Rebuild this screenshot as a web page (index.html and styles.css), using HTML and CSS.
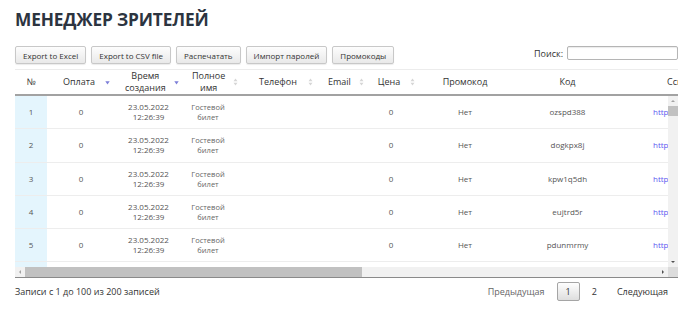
FILE: index.html
```html
<!DOCTYPE html>
<html lang="ru">
<head>
<meta charset="utf-8">
<title>Менеджер зрителей</title>
<link rel="stylesheet" href="styles.css">
</head>
<body>
<div class="page">
  <h1 class="title">МЕНЕДЖЕР ЗРИТЕЛЕЙ</h1>
  <div class="toolbar">
    <div class="buttons">
      <button class="btn" type="button">Export to Excel</button>
      <button class="btn" type="button">Export to CSV file</button>
      <button class="btn" type="button">Распечатать</button>
      <button class="btn" type="button">Импорт паролей</button>
      <button class="btn" type="button">Промокоды</button>
    </div>
    <label class="search">Поиск: <input class="search-input" type="search"></label>
  </div>

  <div class="dt">
    <div class="dt-head">
      <table class="grid">
        <colgroup>
          <col class="w-num"><col class="w-pay"><col class="w-time"><col class="w-name"><col class="w-phone"><col class="w-email"><col class="w-price"><col class="w-promo"><col class="w-code"><col class="w-link">
        </colgroup>
        <thead>
          <tr>
            <th><div class="th-in"><span class="th-t">№</span></div></th>
            <th><div class="th-in"><span class="th-t th-pay">Оплата</span><svg class="sort" viewBox="0 0 5 8"><path d="M0.3 3.3h4.4L2.5 6.6z" fill="#7c7fd8"/></svg></div></th>
            <th><div class="th-in"><span class="th-t">Время создания</span><svg class="sort" viewBox="0 0 5 8"><path d="M0.3 3.3h4.4L2.5 6.6z" fill="#7c7fd8"/></svg></div></th>
            <th><div class="th-in"><span class="th-t">Полное имя</span><svg class="sort" viewBox="0 0 5 8"><path d="M0.5 3.2h4L2.5 0.5z M0.5 4.8h4L2.5 7.5z" fill="#d6d6d6"/></svg></div></th>
            <th><div class="th-in"><span class="th-t th-phone">Телефон</span><svg class="sort" viewBox="0 0 5 8"><path d="M0.5 3.2h4L2.5 0.5z M0.5 4.8h4L2.5 7.5z" fill="#d6d6d6"/></svg></div></th>
            <th><div class="th-in"><span class="th-t">Email</span><svg class="sort" viewBox="0 0 5 8"><path d="M0.5 3.2h4L2.5 0.5z M0.5 4.8h4L2.5 7.5z" fill="#d6d6d6"/></svg></div></th>
            <th><div class="th-in"><span class="th-t th-price">Цена</span><svg class="sort" viewBox="0 0 5 8"><path d="M0.5 3.2h4L2.5 0.5z M0.5 4.8h4L2.5 7.5z" fill="#d6d6d6"/></svg></div></th>
            <th><div class="th-in"><span class="th-t">Промокод</span></div></th>
            <th><div class="th-in"><span class="th-t">Код</span></div></th>
            <th class="th-left"><div class="th-in"><span class="th-t">Ссылка</span></div></th>
          </tr>
        </thead>
      </table>
    </div>
    <div class="dt-scroll">
      <div class="viewport">
        <table class="grid">
          <colgroup>
            <col class="w-num"><col class="w-pay"><col class="w-time"><col class="w-name"><col class="w-phone"><col class="w-email"><col class="w-price"><col class="w-promo"><col class="w-code"><col class="w-link">
          </colgroup>
          <tbody>
            <tr><td class="sorted">1</td><td>0</td><td>23.05.2022 12:26:39</td><td class="name">Гостевой билет</td><td></td><td></td><td>0</td><td>Нет</td><td>ozspd388</td><td class="link"><a href="#">https://tickets.example.ru/t/ozspd388</a></td></tr>
            <tr><td class="sorted">2</td><td>0</td><td>23.05.2022 12:26:39</td><td class="name">Гостевой билет</td><td></td><td></td><td>0</td><td>Нет</td><td>dogkpx8j</td><td class="link"><a href="#">https://tickets.example.ru/t/dogkpx8j</a></td></tr>
            <tr><td class="sorted">3</td><td>0</td><td>23.05.2022 12:26:39</td><td class="name">Гостевой билет</td><td></td><td></td><td>0</td><td>Нет</td><td>kpw1q5dh</td><td class="link"><a href="#">https://tickets.example.ru/t/kpw1q5dh</a></td></tr>
            <tr><td class="sorted">4</td><td>0</td><td>23.05.2022 12:26:39</td><td class="name">Гостевой билет</td><td></td><td></td><td>0</td><td>Нет</td><td>eujtrd5r</td><td class="link"><a href="#">https://tickets.example.ru/t/eujtrd5r</a></td></tr>
            <tr><td class="sorted">5</td><td>0</td><td>23.05.2022 12:26:39</td><td class="name">Гостевой билет</td><td></td><td></td><td>0</td><td>Нет</td><td>pdunmrmy</td><td class="link"><a href="#">https://tickets.example.ru/t/pdunmrmy</a></td></tr>
            <tr><td class="sorted">&nbsp;</td><td></td><td></td><td></td><td></td><td></td><td></td><td></td><td></td><td></td></tr>
          </tbody>
        </table>
      </div>
      <div class="vbar">
        <div class="sb-btn"><svg viewBox="0 0 10 10"><path d="M3 6h4L5 4z" fill="#a3a3a3"/></svg></div>
        <div class="vthumb"></div>
        <div class="sb-track"></div>
        <div class="sb-btn"><svg viewBox="0 0 10 10"><path d="M3 4h4L5 6z" fill="#505050"/></svg></div>
      </div>
      <div class="hbar">
        <div class="sb-btn"><svg viewBox="0 0 10 10"><path d="M6 3v4L4 5z" fill="#a3a3a3"/></svg></div>
        <div class="hthumb"></div>
        <div class="sb-track"></div>
        <div class="sb-btn"><svg viewBox="0 0 10 10"><path d="M4 3v4L6 5z" fill="#505050"/></svg></div>
      </div>
      <div class="corner"></div>
    </div>
  </div>

  <div class="footer">
    <div class="info">Записи с 1 до 100 из 200 записей</div>
    <div class="pager">
      <span class="pg-link disabled">Предыдущая</span>
      <span class="pg-btn">1</span>
      <span class="pg-link">2</span>
      <span class="pg-link">Следующая</span>
    </div>
  </div>
</div>
</body>
</html>
```

FILE: styles.css
```css
* { box-sizing: border-box; }
html, body { margin: 0; padding: 0; background: #fff; }
body {
  font-family: "Open Sans", "Noto Sans", sans-serif;
  color: #333;
  width: 700px;
  height: 311px;
  overflow: hidden;
}
.page { padding: 9px 22px 0 15px; }
.title {
  margin: 0;
  font-size: 17.3px;
  line-height: 22px;
  font-weight: 700;
  color: #2c3440;
  letter-spacing: -0.15px;
}
.toolbar {
  margin-top: 15px;
  display: flex;
  justify-content: space-between;
  align-items: flex-start;
}
.buttons { display: flex; gap: 5px; }
.btn {
  font-family: inherit;
  font-size: 8px;
  line-height: 11px;
  height: 18px;
  padding: 0 7px;
  color: #333;
  border: 1px solid #c8c8c8;
  border-radius: 2px;
  background: linear-gradient(#fdfdfd, #e9e9e9);
  box-shadow: 0 1px 1px rgba(0,0,0,0.08);
}
.search { display: flex; align-items: center; gap: 4px; font-size: 9px; color: #333; }
.search-input {
  width: 111px;
  height: 14px;
  border: 1px solid #b5b5b5;
  border-radius: 2px;
  padding: 0 3px;
  box-shadow: inset 0 1px 1px rgba(0,0,0,0.08);
}
.dt { margin-top: 5px; }
.dt-head { overflow: hidden; }
.grid { table-layout: fixed; width: 920px; border-collapse: collapse; }
.w-num { width: 32px; }
.w-pay { width: 68px; }
.w-time { width: 67px; }
.w-name { width: 52px; }
.w-phone { width: 84px; }
.w-email { width: 44px; }
.w-price { width: 58px; }
.w-promo { width: 90px; }
.w-code { width: 115px; }
.w-link { width: 310px; }

.grid th {
  border-top: 1px solid #ececec;
  border-bottom: 2px solid #a2a2a2;
  padding: 0;
  height: 25px;
  font-size: 9px;
  line-height: 12px;
  font-weight: 400;
  color: #333;
  vertical-align: middle;
}
.th-in { display: flex; align-items: center; padding: 0 2px 0 10px; }
.th-t { flex: 1; text-align: center; padding-right: 8px; }
.th-t.th-pay { padding-right: 4px; }
.th-t.th-phone { padding-right: 0; padding-left: 4px; }
.th-t.th-price { padding-right: 4px; }
.th-left .th-t { text-align: left; padding-left: 32px; white-space: nowrap; }
.sort { width: 5px; height: 8px; flex: none; margin-right: 3px; }

.dt-scroll {
  display: grid;
  grid-template-columns: 1fr 10px;
  grid-template-rows: 171px 10px;
  border-bottom: 1px solid #8a8a8a;
}
.viewport { overflow: hidden; }
.grid td {
  padding: 6.15px 10px;
  font-size: 8px;
  line-height: 10px;
  color: #555;
  text-align: center;
  border-bottom: 1px solid #ededed;
}
.grid td.sorted { background: #e4f5fd; }
.grid td.name { font-size: 7.5px; color: #666; padding: 6.15px 4px; }
.grid td.link { text-align: left; padding-left: 28px; white-space: nowrap; overflow: hidden; }
.grid td.link a { color: #5a5af0; text-decoration: none; }

.vbar { display: flex; flex-direction: column; background: #f1f1f1; }
.hbar { display: flex; background: #f1f1f1; }
.sb-btn { width: 10px; height: 10px; flex: none; display: flex; }
.sb-btn svg { width: 10px; height: 10px; }
.sb-track { flex: 1; }
.vthumb { height: 10px; flex: none; background: #c1c1c1; }
.hthumb { width: 337px; flex: none; background: #c1c1c1; }
.corner { background: #dcdcdc; }

.footer {
  margin-top: 4px;
  display: flex;
  justify-content: space-between;
  align-items: center;
  font-size: 9px;
}
.info { color: #333; }
.pager { display: flex; align-items: center; }
.pg-link { padding: 0 10px; color: #333; }
.pg-link.disabled { color: #666; }
.pg-btn {
  margin: 0 2px;
  height: 19px;
  padding: 0 8px;
  display: flex;
  align-items: center;
  border: 1px solid #a5a5a5;
  border-radius: 2px;
  background: linear-gradient(#fefefe, #dedede);
  color: #333;
}
```
